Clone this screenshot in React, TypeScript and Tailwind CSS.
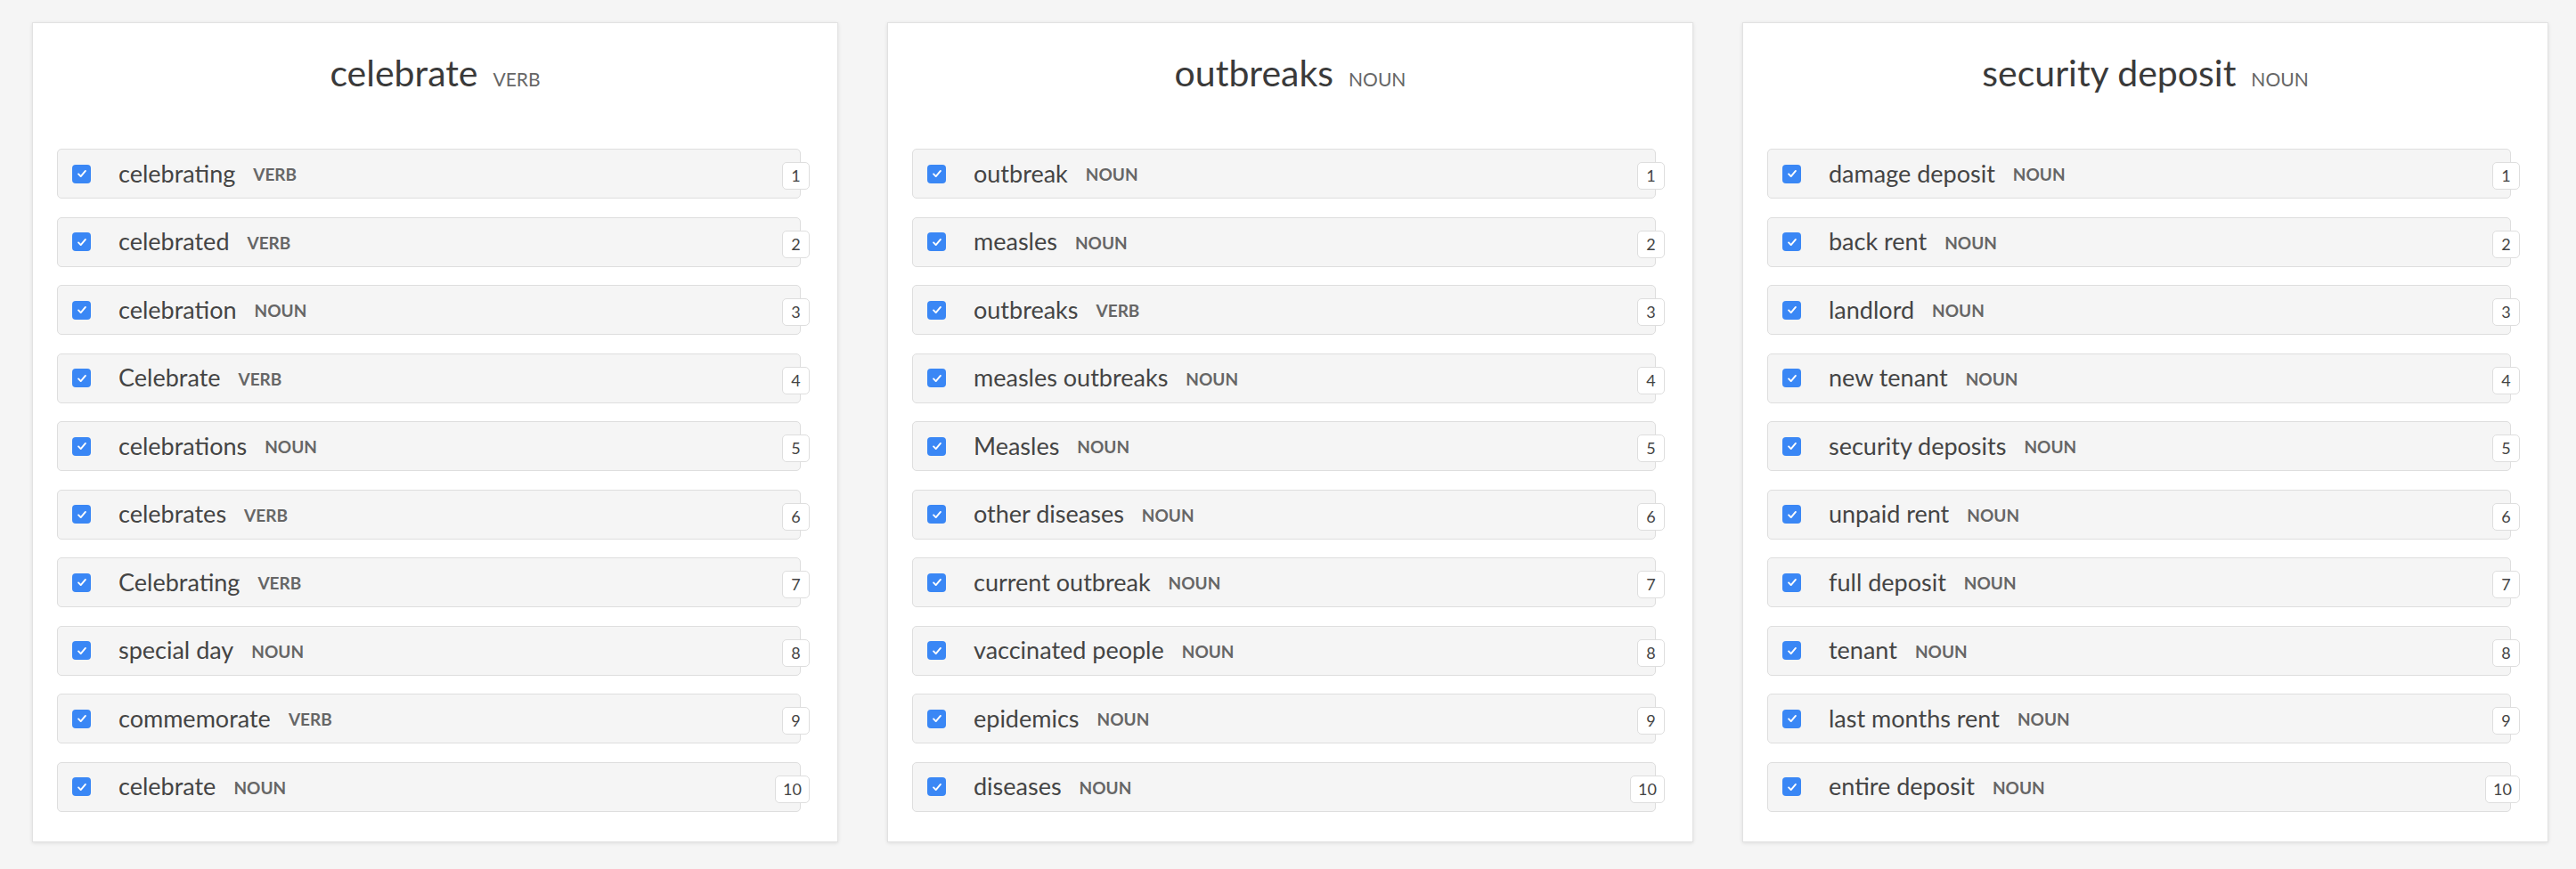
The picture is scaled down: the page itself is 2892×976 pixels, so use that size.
import React from 'react';

type Term = { text: string; pos: 'VERB' | 'NOUN' };

interface Group {
  word: string;
  pos: 'VERB' | 'NOUN';
  related: Term[];
}

const n = (text: string): Term => ({ text, pos: 'NOUN' });
const v = (text: string): Term => ({ text, pos: 'VERB' });

const groups: Group[] = [
  {
    word: 'celebrate',
    pos: 'VERB',
    related: [
      v('celebrating'),
      v('celebrated'),
      n('celebration'),
      v('Celebrate'),
      n('celebrations'),
      v('celebrates'),
      v('Celebrating'),
      n('special day'),
      v('commemorate'),
      n('celebrate'),
    ],
  },
  {
    word: 'outbreaks',
    pos: 'NOUN',
    related: [
      n('outbreak'),
      n('measles'),
      v('outbreaks'),
      n('measles outbreaks'),
      n('Measles'),
      n('other diseases'),
      n('current outbreak'),
      n('vaccinated people'),
      n('epidemics'),
      n('diseases'),
    ],
  },
  {
    word: 'security deposit',
    pos: 'NOUN',
    related: [
      n('damage deposit'),
      n('back rent'),
      n('landlord'),
      n('new tenant'),
      n('security deposits'),
      n('unpaid rent'),
      n('full deposit'),
      n('tenant'),
      n('last months rent'),
      n('entire deposit'),
    ],
  },
];

function CheckBox() {
  return (
    <div className="w-[21px] h-[21px] rounded-[4px] bg-[#3a87f5] flex items-center justify-center shrink-0">
      <svg viewBox="0 0 16 16" className="w-[14px] h-[14px]" fill="none" stroke="white" strokeWidth="2.2" strokeLinecap="round" strokeLinejoin="round">
        <path d="M3.5 8.5l3 3 6-7" />
      </svg>
    </div>
  );
}

function TermRow({ term, rank }: { term: Term; rank: number }) {
  return (
    <div className="relative h-[56px] mr-[41px] flex items-center pl-[16px] bg-[#f5f5f5] border border-[#dedede] rounded-[5px]">
      <CheckBox />
      <span className="ml-[31px] text-[27px] text-[#444]">{term.text}</span>
      <span className="ml-[20px] text-[19px] font-bold text-[#666] pt-[3px]">{term.pos}</span>
      <div className="absolute right-[-11px] top-[14px] h-[31px] min-w-[31px] px-[8px] flex items-center justify-center bg-white border border-[#dedede] rounded-[5px] text-[18px] text-[#444]">
        {rank}
      </div>
    </div>
  );
}

function GroupCard({ group }: { group: Group }) {
  return (
    <div className="w-[905px] bg-white border border-[#e2e2e2] shadow-[0_1px_4px_rgba(0,0,0,0.10)] pt-[31px] pb-[33px] pl-[27px]">
      <div className="flex items-baseline justify-center pr-[27px] leading-[1.2]">
        <span className="text-[41px] text-[#3a3a3a]">{group.word}</span>
        <span className="ml-[17px] text-[21px] text-[#666]">{group.pos}</span>
      </div>
      <div className="mt-[61px] flex flex-col gap-[20.5px]">
        {group.related.map((t, i) => (
          <TermRow key={t.text + i} term={t} rank={i + 1} />
        ))}
      </div>
    </div>
  );
}

export default function App() {
  return (
    <div className="min-h-[976px] bg-[#f5f5f5] font-['Lato','Liberation_Sans',sans-serif]">
      <div className="flex items-start gap-[55px] pl-[36px] pt-[25px]">
        {groups.map((g) => (
          <GroupCard key={g.word} group={g} />
        ))}
      </div>
    </div>
  );
}
